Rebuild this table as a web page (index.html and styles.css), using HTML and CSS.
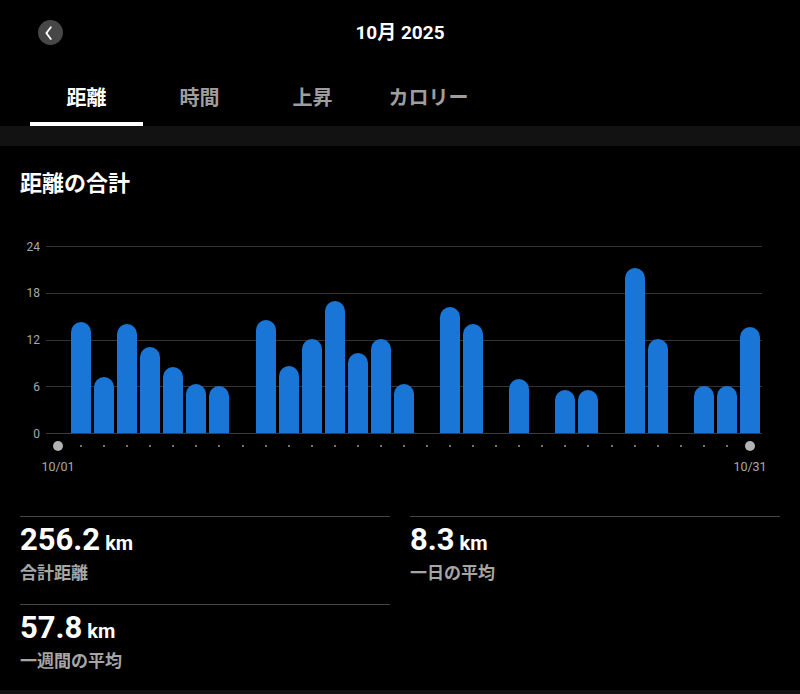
FILE: index.html
```html
<!DOCTYPE html>
<html lang="ja">
<head>
<meta charset="utf-8">
<link rel="stylesheet" href="styles.css">
</head>
<body>
<div class="page">
  <header class="header">
    <button class="back" aria-label="戻る">
      <svg width="25" height="25" viewBox="0 0 25 25"><circle cx="12.5" cy="12.5" r="12.5" fill="#474747"/><path d="M12.8 7.3 L8.4 13.1 L12.8 19" fill="none" stroke="#fff" stroke-width="1.8" stroke-linecap="round" stroke-linejoin="round"/></svg>
    </button>
    <div class="title">10月 2025</div>
  </header>
  <nav class="tabs">
    <div class="tab active">距離</div>
    <div class="tab">時間</div>
    <div class="tab">上昇</div>
    <div class="tab wide">カロリー</div>
  </nav>
  <div class="band"></div>
  <section class="section">
    <h2 class="sec-title">距離の合計</h2>
    <div class="chart">
      <div class="grid">
        <div class="gridrow"><span class="ylab">24</span><span class="gline"></span></div>
        <div class="gridrow"><span class="ylab">18</span><span class="gline"></span></div>
        <div class="gridrow"><span class="ylab">12</span><span class="gline"></span></div>
        <div class="gridrow"><span class="ylab">6</span><span class="gline"></span></div>
        <div class="gridrow"><span class="ylab">0</span><span class="gline base"></span></div>
      </div>
      <div class="bars">
        <div class="slot"></div>
        <div class="slot"><div class="bar" style="height:111px"></div></div>
        <div class="slot"><div class="bar" style="height:56px"></div></div>
        <div class="slot"><div class="bar" style="height:109px"></div></div>
        <div class="slot"><div class="bar" style="height:86px"></div></div>
        <div class="slot"><div class="bar" style="height:66px"></div></div>
        <div class="slot"><div class="bar" style="height:49px"></div></div>
        <div class="slot"><div class="bar" style="height:47px"></div></div>
        <div class="slot"></div>
        <div class="slot"><div class="bar" style="height:113px"></div></div>
        <div class="slot"><div class="bar" style="height:67px"></div></div>
        <div class="slot"><div class="bar" style="height:94px"></div></div>
        <div class="slot"><div class="bar" style="height:132px"></div></div>
        <div class="slot"><div class="bar" style="height:80px"></div></div>
        <div class="slot"><div class="bar" style="height:94px"></div></div>
        <div class="slot"><div class="bar" style="height:49px"></div></div>
        <div class="slot"></div>
        <div class="slot"><div class="bar" style="height:126px"></div></div>
        <div class="slot"><div class="bar" style="height:109px"></div></div>
        <div class="slot"></div>
        <div class="slot"><div class="bar" style="height:54px"></div></div>
        <div class="slot"></div>
        <div class="slot"><div class="bar" style="height:43px"></div></div>
        <div class="slot"><div class="bar" style="height:43px"></div></div>
        <div class="slot"></div>
        <div class="slot"><div class="bar" style="height:165px"></div></div>
        <div class="slot"><div class="bar" style="height:94px"></div></div>
        <div class="slot"></div>
        <div class="slot"><div class="bar" style="height:47px"></div></div>
        <div class="slot"><div class="bar" style="height:47px"></div></div>
        <div class="slot"><div class="bar" style="height:106px"></div></div>
      </div>
    </div>
    <div class="dots">
      <span class="dslot"><i class="dot big"></i></span>
      <span class="dslot"><i class="dot"></i></span>
      <span class="dslot"><i class="dot"></i></span>
      <span class="dslot"><i class="dot"></i></span>
      <span class="dslot"><i class="dot"></i></span>
      <span class="dslot"><i class="dot"></i></span>
      <span class="dslot"><i class="dot"></i></span>
      <span class="dslot"><i class="dot"></i></span>
      <span class="dslot"><i class="dot"></i></span>
      <span class="dslot"><i class="dot"></i></span>
      <span class="dslot"><i class="dot"></i></span>
      <span class="dslot"><i class="dot"></i></span>
      <span class="dslot"><i class="dot"></i></span>
      <span class="dslot"><i class="dot"></i></span>
      <span class="dslot"><i class="dot"></i></span>
      <span class="dslot"><i class="dot"></i></span>
      <span class="dslot"><i class="dot"></i></span>
      <span class="dslot"><i class="dot"></i></span>
      <span class="dslot"><i class="dot"></i></span>
      <span class="dslot"><i class="dot"></i></span>
      <span class="dslot"><i class="dot"></i></span>
      <span class="dslot"><i class="dot"></i></span>
      <span class="dslot"><i class="dot"></i></span>
      <span class="dslot"><i class="dot"></i></span>
      <span class="dslot"><i class="dot"></i></span>
      <span class="dslot"><i class="dot"></i></span>
      <span class="dslot"><i class="dot"></i></span>
      <span class="dslot"><i class="dot"></i></span>
      <span class="dslot"><i class="dot"></i></span>
      <span class="dslot"><i class="dot"></i></span>
      <span class="dslot"><i class="dot big"></i></span>
    </div>
    <div class="dates">
      <span class="date">10/01</span>
      <span class="date">10/31</span>
    </div>
    <div class="stats">
      <div class="stat">
        <div class="value">256.2<span class="unit">km</span></div>
        <div class="label">合計距離</div>
      </div>
      <div class="stat">
        <div class="value">8.3<span class="unit">km</span></div>
        <div class="label">一日の平均</div>
      </div>
      <div class="stat">
        <div class="value">57.8<span class="unit">km</span></div>
        <div class="label">一週間の平均</div>
      </div>
    </div>
  </section>
  <div class="band bottom"></div>
</div>
</body>
</html>
```

FILE: styles.css
```css
* { box-sizing: border-box; }
html, body { margin: 0; padding: 0; background: #000; }
body {
  width: 800px;
  height: 694px;
  overflow: hidden;
  font-family: "Roboto", "Noto Sans CJK JP", sans-serif;
  color: #fff;
}
.page { display: flex; flex-direction: column; height: 694px; overflow: hidden; }
.page > * { flex: none; }

.header {
  height: 64px;
  display: flex;
  align-items: center;
  position: relative;
}
.back {
  position: absolute;
  left: 38px;
  top: 20px;
  width: 25px;
  height: 25px;
  padding: 0;
  border: 0;
  background: none;
  display: block;
}
.back svg { display: block; }
.title {
  flex: 1;
  text-align: center;
  font-size: 19px;
  font-weight: 700;
  line-height: 24px;
  padding-top: 2px;
}

.tabs {
  display: flex;
  padding-left: 30px;
  height: 62px;
}
.tab {
  width: 113px;
  display: flex;
  align-items: center;
  justify-content: center;
  font-size: 20px;
  font-weight: 700;
  color: #9e9e9e;
  padding-top: 6px;
  border-bottom: 4px solid transparent;
}
.tab.wide { padding-left: 6px; }
.tab.active { color: #fff; border-bottom-color: #fff; }

.band { height: 20px; background: #121212; }
.band.bottom { height: 6px; }

.section { display: flex; flex-direction: column; }
.sec-title {
  margin: 24px 0 0 20px;
  font-size: 22px;
  line-height: 28px;
  font-weight: 700;
}

.chart {
  position: relative;
  margin: 48px 38px 0 20px;
  height: 188px;
}
.grid {
  height: 100%;
  display: flex;
  flex-direction: column;
  justify-content: space-between;
}
.gridrow {
  height: 1px;
  display: flex;
  align-items: center;
  gap: 6px;
}
.ylab {
  width: 20px;
  text-align: right;
  font-size: 12px;
  line-height: 14px;
  color: #a8a8a8;
}
.gline { flex: 1; height: 1px; background: #333; }
.gline.base { background: #3c3c3c; }

.bars {
  position: absolute;
  left: 26.5px;
  right: 0.5px;
  top: 0;
  bottom: 1px;
  display: flex;
  align-items: flex-end;
}
.slot {
  flex: 1;
  display: flex;
  justify-content: center;
  align-items: flex-end;
  height: 100%;
}
.bar {
  width: 20px;
  background: #1a76d6;
  border-radius: 10px 10px 0 0;
}

.dots {
  display: flex;
  margin: 7px 38.5px 0 46.5px;
  height: 10px;
}
.dslot {
  flex: 1;
  display: flex;
  align-items: center;
  justify-content: center;
}
.dot {
  width: 2px;
  height: 2px;
  border-radius: 50%;
  background: #9a9a9a;
}
.dot.big {
  width: 10px;
  height: 10px;
  background: #b3b3b3;
}

.dates {
  display: flex;
  justify-content: space-between;
  margin: 8px 38.5px 0 46.5px;
}
.date {
  width: 23px;
  display: flex;
  justify-content: center;
  white-space: nowrap;
  font-size: 12.5px;
  line-height: 16px;
  color: #a8a8a8;
}

.stats {
  display: grid;
  grid-template-columns: 1fr 1fr;
  grid-template-rows: 88px 86px;
  column-gap: 20px;
  padding: 0 20px;
  margin-top: 41px;
}
.stat {
  border-top: 1px solid #444;
  padding-top: 5px;
}
.value {
  font-size: 31px;
  font-weight: 700;
  line-height: 36px;
}
.unit {
  font-size: 20px;
  margin-left: 5px;
}
.label {
  margin-top: 1px;
  font-size: 17px;
  line-height: 22px;
  font-weight: 700;
  color: #a6a6a6;
}
```
